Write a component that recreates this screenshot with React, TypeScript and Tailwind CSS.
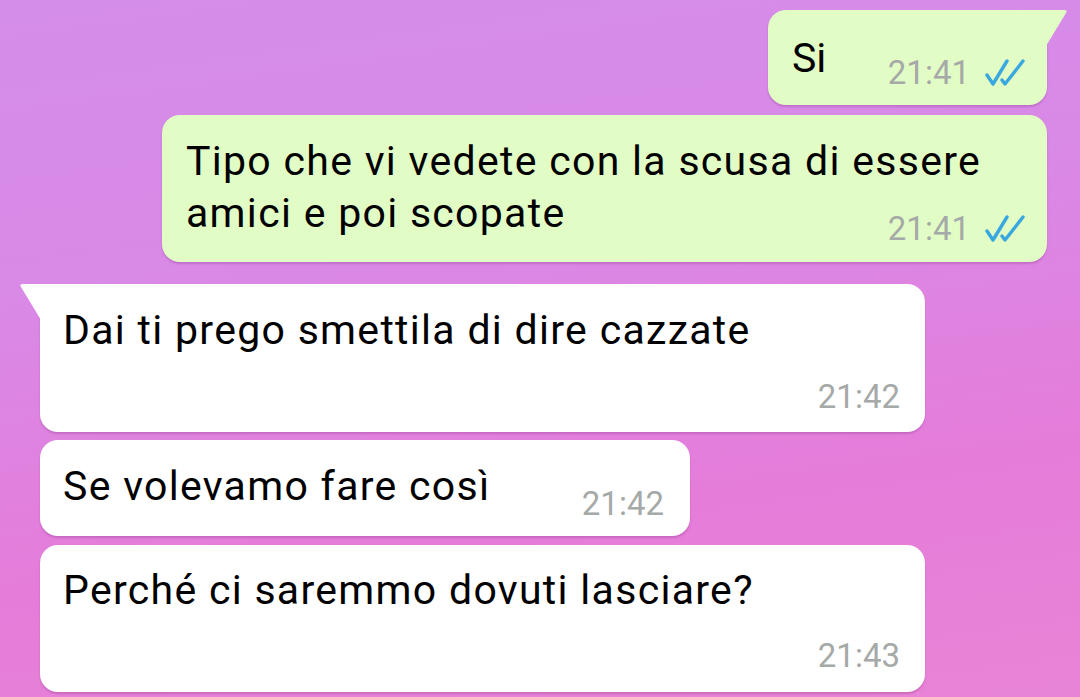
import React from 'react';

function Ticks() {
  return (
    <svg viewBox="0 0 40 28" className="w-[40px] h-[28px]" fill="none" stroke="#39a8e0" strokeWidth="3.4" strokeLinecap="round" strokeLinejoin="round">
      <polyline points="2,16 8,25 22,2" />
      <polyline points="17,21 20,25 38,2" />
    </svg>
  );
}

function Time({ t, read }: { t: string; read?: boolean }) {
  return (
    <span className="flex items-center gap-[15px] text-[33px] leading-none text-[#a5a9a7]">
      {t}
      {read && <Ticks />}
    </span>
  );
}

function OutTail() {
  return (
    <svg viewBox="0 0 22 40" className="absolute top-0 right-[-21px] w-[22px] h-[40px]">
      <path d="M0 0 H18 Q22 0 20 3 L0 36 Z" fill="#e2fcc6" />
    </svg>
  );
}

function InTail() {
  return (
    <svg viewBox="0 0 22 40" className="absolute top-0 left-[-21px] w-[22px] h-[40px]">
      <path d="M22 0 H4 Q0 0 2 3 L22 36 Z" fill="#ffffff" />
    </svg>
  );
}

export default function App() {
  const out = 'relative bg-[#e2fcc6] rounded-[18px] shadow-[0_2px_2px_rgba(120,40,120,0.25)]';
  const inc = 'relative bg-white rounded-[18px] shadow-[0_2px_2px_rgba(120,40,120,0.25)]';
  const body = 'text-[41px] leading-[52px] tracking-[1.3px]';
  return (
    <div
      className="w-[1080px] h-[697px] overflow-hidden bg-[linear-gradient(172deg,#d48de9_0%,#d989e6_35%,#e57cda_70%,#e884d6_100%)] pl-[40px] pr-[33px] pt-[10px] flex flex-col text-black"
      style={{ fontFamily: 'Roboto, "Liberation Sans", sans-serif' }}
    >
      <div className="flex justify-end">
        <div className={`${out} rounded-tr-none w-[279px] h-[95px] pl-[24px] pr-[22px] flex items-start`}>
          <OutTail />
          <span className="text-[41px] leading-none mt-[28px]">Si</span>
          <span className="ml-auto mt-[46px]">
            <Time t="21:41" read />
          </span>
        </div>
      </div>

      <div className="flex justify-end mt-[10px]">
        <div className={`${out} w-[885px] h-[147px] pl-[24px] pr-[22px] pt-[20px]`}>
          <p className={body}>
            Tipo che vi vedete con la scusa di essere
            <br />
            amici e poi scopate
          </p>
          <span className="absolute right-[22px] bottom-[17px]">
            <Time t="21:41" read />
          </span>
        </div>
      </div>

      <div className={`${inc} rounded-tl-none w-[885px] h-[148px] mt-[22px] pl-[23px] pr-[25px] pt-[20px] flex flex-col`}>
        <InTail />
        <p className={body}>Dai ti prego smettila di dire cazzate</p>
        <span className="ml-auto mt-auto mb-[19px]">
          <Time t="21:42" />
        </span>
      </div>

      <div className={`${inc} w-[650px] h-[96px] mt-[8px] pl-[23px] pr-[26px] flex items-start`}>
        <span className={`${body} mt-[20px]`}>Se volevamo fare così</span>
        <span className="ml-auto mt-[47px]">
          <Time t="21:42" />
        </span>
      </div>

      <div className={`${inc} w-[885px] h-[147px] mt-[9px] pl-[23px] pr-[25px] pt-[19px] flex flex-col`}>
        <p className={body}>Perché ci saremmo dovuti lasciare?</p>
        <span className="ml-auto mt-auto mb-[20px]">
          <Time t="21:43" />
        </span>
      </div>
    </div>
  );
}
